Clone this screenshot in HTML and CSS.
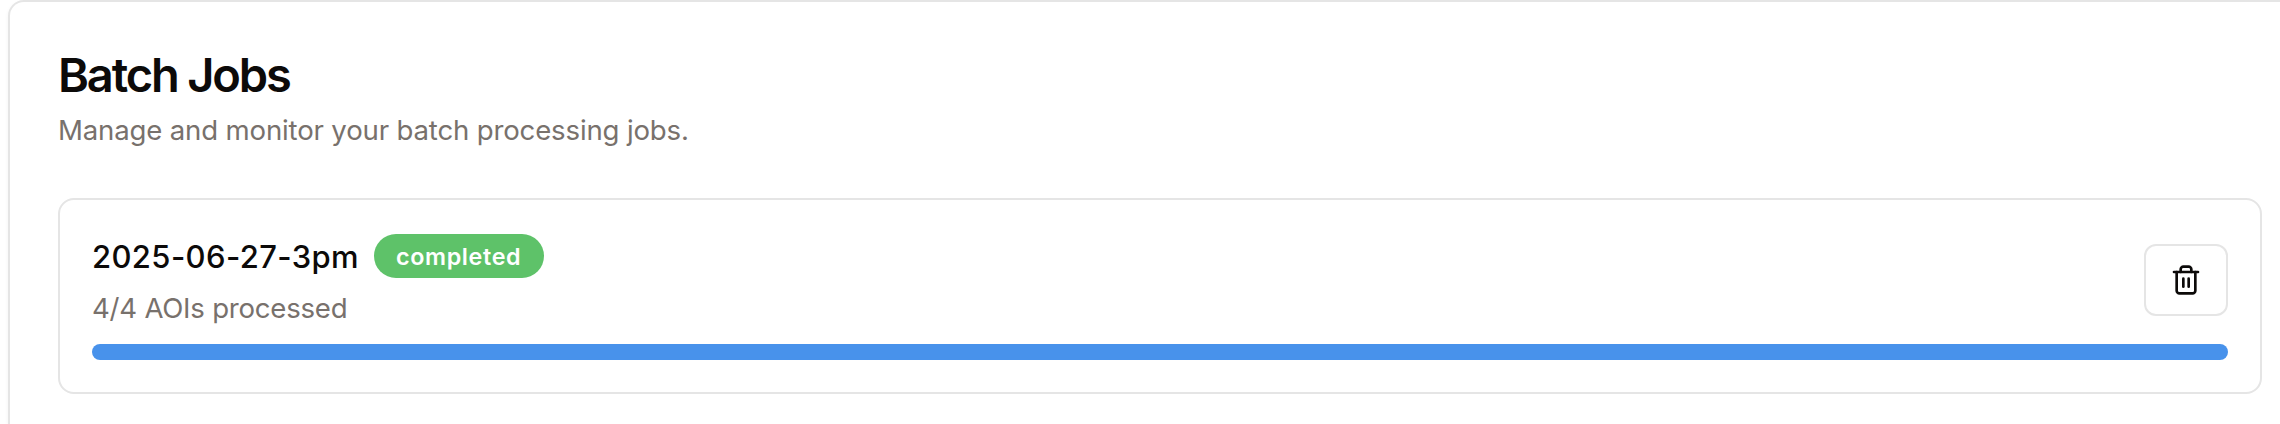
FILE: index.html
```html
<!DOCTYPE html>
<html lang="en">
<head>
<meta charset="utf-8">
<title>Batch Jobs</title>
<link rel="stylesheet" href="styles.css">
</head>
<body>
<main class="panel">
  <header class="panel-header">
    <h1 class="title">Batch Jobs</h1>
    <p class="description">Manage and monitor your batch processing jobs.</p>
  </header>
  <article class="job">
    <div class="job-row">
      <div class="job-info">
        <div class="job-heading">
          <h2 class="job-name">2025-06-27-3pm</h2>
          <span class="badge">completed</span>
        </div>
        <p class="job-count">4/4 AOIs processed</p>
      </div>
      <button class="delete" type="button" aria-label="Delete job">
        <svg class="icon" viewBox="0 0 24 24" fill="none" stroke="currentColor" stroke-width="2" stroke-linecap="round" stroke-linejoin="round">
          <path d="M3 6h18"/>
          <path d="M19 6v14c0 1-1 2-2 2H7c-1 0-2-1-2-2V6"/>
          <path d="M8 6V4c0-1 1-2 2-2h4c1 0 2 1 2 2v2"/>
          <path d="M10 11v6"/>
          <path d="M14 11v6"/>
        </svg>
      </button>
    </div>
    <div class="progress"><div class="progress-fill" style="width:100%"></div></div>
  </article>
</main>
</body>
</html>
```
FILE: styles.css
```css
* { box-sizing: border-box; }
body {
  margin: 0;
  height: 424px;
  overflow: hidden;
  background: #fff;
  color: #0c0a09;
  font-family: Inter, "Liberation Sans", sans-serif;
}
h1, h2, p { margin: 0; }
.panel {
  width: 2304px;
  height: 424px;
  margin-left: 8px;
  padding: 48px 48px 0;
  border: 2px solid #e5e5e5;
  border-bottom: 0;
  border-radius: 16px 16px 0 0;
  background: #fff;
  box-shadow: 0 2px 4px rgba(0, 0, 0, 0.05);
}
.panel-header {
  display: flex;
  flex-direction: column;
  gap: 12px;
  margin-bottom: 48px;
}
.title {
  height: 48px;
  font-size: 47px;
  line-height: 50px;
  font-weight: 600;
  letter-spacing: -2.15px;
}
.description, .job-count {
  height: 40px;
  font-size: 27.6px;
  line-height: 41px;
  letter-spacing: -0.17px;
  color: #78716c;
}
.job-count { letter-spacing: -0.24px; }
.job {
  padding: 32px;
  border: 2px solid #e5e5e5;
  border-radius: 16px;
}
.job-row {
  display: flex;
  align-items: center;
  justify-content: space-between;
}
.job-info {
  display: flex;
  flex-direction: column;
  gap: 8px;
}
.job-heading {
  display: flex;
  align-items: center;
  gap: 16px;
}
.job-name {
  width: 266px;
  height: 48px;
  font-size: 31px;
  line-height: 50px;
  font-weight: 500;
  letter-spacing: 0.38px;
  white-space: nowrap;
}
.badge {
  width: 170px;
  height: 44px;
  padding: 6px 0 6px 22px;
  border-radius: 22px;
  background: #5ec269;
  color: #fff;
  font-size: 23.3px;
  line-height: 34px;
  font-weight: 600;
  letter-spacing: 0.65px;
}
.delete {
  display: flex;
  align-items: center;
  justify-content: center;
  width: 84px;
  height: 72px;
  padding: 0;
  border: 2px solid #e5e5e5;
  border-radius: 12px;
  background: #fff;
  color: #0c0a09;
}
.icon { width: 32px; height: 32px; }
.progress {
  height: 16px;
  margin-top: 16px;
  border-radius: 8px;
  overflow: hidden;
}
.progress-fill {
  height: 100%;
  background: #4892eb;
}
```
